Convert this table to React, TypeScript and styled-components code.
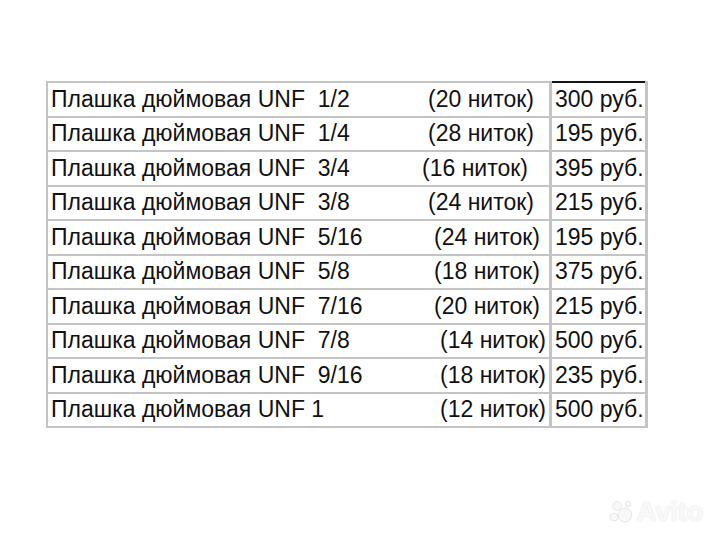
import { FC } from "react";
import styled, { createGlobalStyle } from "styled-components";

const GlobalStyle = createGlobalStyle`
  html, body {
    margin: 0;
    padding: 0;
    background: #ffffff;
  }
  body {
    font-family: "Liberation Sans", Arial, sans-serif;
  }
`;

const Page = styled.div`
  position: relative;
  width: 715px;
  height: 540px;
  background: #ffffff;
  padding: 81px 0 0 46px;
  box-sizing: border-box;
`;

const PriceTable = styled.div`
  display: grid;
  grid-template-columns: 501px 93px;
  grid-auto-rows: 32.5px;
  column-gap: 3px;
  row-gap: 2px;
  padding: 2px 3px 2px 2px;
  width: max-content;
  background: #c4c4c4;
`;

const NameCell = styled.div`
  display: flex;
  align-items: center;
  background: #ffffff;
  padding-left: 3px;
  font-size: 23px;
  color: #111111;
  white-space: pre;
  position: relative;
`;

const Threads = styled.span<{ $at: number }>`
  position: absolute;
  left: ${(p) => p.$at}px;
`;

const PriceCell = styled.div<{ $first?: boolean }>`
  display: flex;
  align-items: center;
  background: #ffffff;
  padding-left: 3px;
  font-size: 23px;
  color: #111111;
  white-space: nowrap;
  box-shadow: ${(p) => (p.$first ? "0 -2px 0 #151515" : "none")};
`;

const Watermark = styled.div`
  position: absolute;
  right: 12px;
  bottom: 12px;
  display: flex;
  align-items: center;
  gap: 2px;
  font-family: "Liberation Sans", Arial, sans-serif;
  font-weight: bold;
  font-size: 28px;
  color: #f8f8f8;
  text-shadow: 0 0 2px rgba(0, 0, 0, 0.12);
  letter-spacing: -0.5px;
`;

interface Row {
  size: string;
  threads: string;
  at: number;
  price: string;
}

const rows: Row[] = [
  { size: "1/2", threads: "(20 ниток)", at: 380, price: "300 руб." },
  { size: "1/4", threads: "(28 ниток)", at: 380, price: "195 руб." },
  { size: "3/4", threads: "(16 ниток)", at: 374, price: "395 руб." },
  { size: "3/8", threads: "(24 ниток)", at: 380, price: "215 руб." },
  { size: "5/16", threads: "(24 ниток)", at: 386, price: "195 руб." },
  { size: "5/8", threads: "(18 ниток)", at: 386, price: "375 руб." },
  { size: "7/16", threads: "(20 ниток)", at: 386, price: "215 руб." },
  { size: "7/8", threads: "(14 ниток)", at: 392, price: "500 руб." },
  { size: "9/16", threads: "(18 ниток)", at: 392, price: "235 руб." },
  { size: "1", threads: "(12 ниток)", at: 392, price: "500 руб." },
];

const AvitoMark: FC = () => (
  <Watermark>
    <svg width="26" height="24" viewBox="0 0 26 24">
      <g fill="#f8f8f8" stroke="rgba(0,0,0,0.1)" strokeWidth="0.8">
        <circle cx="16" cy="15" r="7" />
        <circle cx="5" cy="17" r="4" />
        <circle cx="8" cy="6" r="4.5" />
        <circle cx="19" cy="4" r="2.8" />
      </g>
    </svg>
    <span>Avito</span>
  </Watermark>
);

const App: FC = () => {
  return (
    <Page>
      <GlobalStyle />
      <PriceTable>
        {rows.map((row, index) => (
          <>
            <NameCell key={`n${index}`}>
              {`Плашка дюймовая UNF ${row.size === "1" ? "" : " "}${row.size}`}
              <Threads $at={row.at}>{row.threads}</Threads>
            </NameCell>
            <PriceCell key={`p${index}`} $first={index === 0}>
              {row.price}
            </PriceCell>
          </>
        ))}
      </PriceTable>
      <AvitoMark />
    </Page>
  );
};

export default App;
